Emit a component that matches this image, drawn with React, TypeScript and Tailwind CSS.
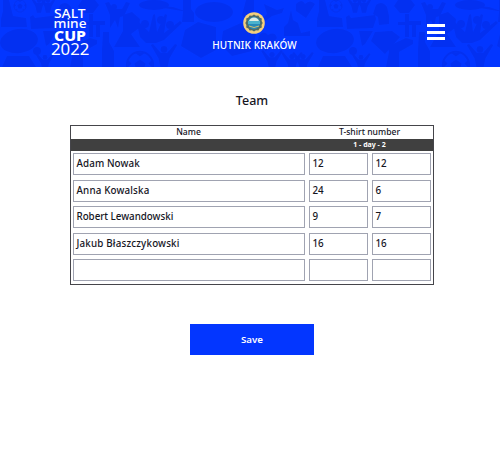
const players = [
  { name: 'Adam Nowak', tracking: 'tracking-[0.1px]', day1: '12', day2: '12' },
  { name: 'Anna Kowalska', tracking: 'tracking-[0.16px]', day1: '24', day2: '6' },
  { name: 'Robert Lewandowski', tracking: 'tracking-[-0.03px]', day1: '9', day2: '7' },
  { name: 'Jakub Błaszczykowski', tracking: 'tracking-[0.18px]', day1: '16', day2: '16' },
  { name: '', tracking: '', day1: '', day2: '' },
];

function Ball({ x, y, r }: { x: number; y: number; r: number }) {
  return (
    <g transform={`translate(${x} ${y}) scale(${r / 10})`}>
      <circle r="9.4" fill="none" stroke="#0330f1" strokeWidth="1.4" />
      <path d="M0-4 4-1 2.5 4h-5L-4-1zM-4-9h8L0-6zM9-4v6L6-1zM-9-4v6l3-3zM4 8l3-3-3 0zM-4 8l-3-3 3 0z" />
    </g>
  );
}

function Fan({ x, y, s }: { x: number; y: number; s: number }) {
  return (
    <g transform={`translate(${x} ${y}) scale(${s})`}>
      <circle cx="0" cy="-6" r="3" />
      <path d="M-12-10l2-1 7 8h6l7-8 2 1-7 12-2 9h-6l-2-9z" />
    </g>
  );
}

function Pattern() {
  return (
    <svg className="absolute inset-0 h-full w-full" aria-hidden="true">
      <defs>
        <pattern id="sport" width="316" height="67" patternUnits="userSpaceOnUse">
          <g fill="#0330f1">
            <Ball x={20} y={6} r={6.5} />
            <path d="M3 0h6l2 8 2 8 13 2 1 9H1v-8l2-8z" />
            <Fan x={39} y={5} s={0.7} />
            <Fan x={48} y={5} s={0.7} />
            <path d="M30 17l3-2 2 3 24-3 1 4-3 9-26 1z" />
            <ellipse cx="19" cy="41" rx="19" ry="12" transform="rotate(-8 19 41)" />
            <path d="M43 31h14l-8 13-3 2-1-5zM59 32l17-1 8 6-15 17-14-13z" />
            <circle cx="37" cy="51" r="4" />
            <path d="M60 5q6-5 11 2l2 9v8l-10 1-1-8-5-3z" />
            <path d="M82 0h13l4 5-6 8h-9l-6-7z" />
            <path d="M105 3l4-1 4 7h9l4-7 4 1-6 13-4 1-2 11-3-8-5 8v-13z" />
            <circle cx="114" cy="7" r="3" />
            <path d="M89 14h4v7h12v4h-5v12h-4V25h-3v12h-4V25h-7v-3h7z" />
            <path d="M123 15l9-3 8 7-1 9-8 6 9 13h-26l9-16z" />
            <path d="M68 32l5-1 4 5v8l13-6 7 2v4l-14 8v15H70l3-15z" />
            <path d="M103 32h6v10l5 9v16h-12V50z" />
            <path d="M7 56h22l7 11H2z" />
            <Fan x={45} y={62} s={0.8} />
            <ellipse cx="154" cy="5" rx="15" ry="5" />
            <path d="M136 4l37 3 15 5-18-3z" />
            <path d="M137 24l2-2 10 10 4-17 2-1 2 18 8-18 2 1-3 18 16-12 2 2-18 17-8 3h-10l-6-6z" />
            <circle cx="145" cy="24" r="4" />
            <circle cx="161" cy="20" r="4" />
            <circle cx="170" cy="25" r="4" />
            <Ball x={140} y={65} r={14} />
            <Fan x={164} y={56} s={1.1} />
            <path d="M183 0h8v9l3 4v9h-12l1-10zM185 30l13-8 18 5v23l-15 8-20-12z" />
            <ellipse cx="214" cy="12" rx="19" ry="10" />
            <path d="M223 31l18-8 15 11-4 17-20 5-11-11zM246 0h8v13l-6 9-6-7z" />
            <path d="M264 4l13 6 7-2-2 5-10 3-9 7-3-2 7-7z" />
            <path d="M296 4q6-6 9 0 5-5 10 0l-9 14-10-7z" />
            <path d="M291 10l2 10 5 3 3 10 9-2v5h-26v-9l4-4zM259 35q5-5 9 0 7-4 9 3l-11 13-9-7z" />
            <Fan x={272} y={60} s={0.9} />
            <Fan x={292} y={62} s={0.9} />
            <Fan x={303} y={62} s={0.9} />
          </g>
        </pattern>
      </defs>
      <rect width="100%" height="100%" fill="url(#sport)" />
    </svg>
  );
}

function CupLogo() {
  return (
    <svg className="absolute left-[50px] top-0" width="42" height="64" viewBox="0 0 42 64" fill="white" fontFamily="'Noto Sans', sans-serif">
      <text x="4" y="17.8" fontSize="12.8" fontWeight="500" textLength="31.5" lengthAdjust="spacingAndGlyphs">SALT</text>
      <text x="3.5" y="28" fontSize="12.8" fontWeight="500" textLength="33" lengthAdjust="spacingAndGlyphs">mine</text>
      <text x="4" y="40.6" fontSize="13.4" fontWeight="800" textLength="32" lengthAdjust="spacingAndGlyphs">CUP</text>
      <text x="1" y="54.8" fontSize="15.8" textLength="38.5" lengthAdjust="spacingAndGlyphs">2022</text>
    </svg>
  );
}

function Crest() {
  return (
    <svg width="22" height="22" viewBox="0 0 22 22">
      <circle cx="11" cy="11" r="10.8" fill="#f5cf7c" />
      <path d="M11 2.5l2 1.3 2.4-.3 1.2 2 2.2 1.1-.2 2.4 1.1 2-1.1 2 .2 2.4-2.2 1.1-1.2 2-2.4-.3-2 1.3-2-1.3-2.4.3-1.2-2-2.2-1.1.2-2.4-1.1-2 1.1-2-.2-2.4 2.2-1.1 1.2-2 2.4.3z" fill="#526b65" />
      <circle cx="11" cy="11" r="6.2" fill="#2788b8" />
      <path d="M6 9a5.3 5.3 0 0 1 10 0z" fill="#e0eee4" />
      <path d="M5 9h12v3H5z" fill="#4bb2cc" />
      <path d="M6 14q5 3 10 0" fill="none" stroke="#d6bd68" />
    </svg>
  );
}

const box = 'flex h-[22px] items-center border border-[#a0a3b1] pl-[2.5px] text-[9.8px] font-medium leading-none';

export default function App() {
  return (
    <div className="flex h-[473px] w-[500px] flex-col items-center overflow-hidden bg-white font-['Noto_Sans',sans-serif] text-[#16161f]">
      <header className="relative flex h-[67px] w-full shrink-0 flex-col items-center bg-[#0336ff] pl-[9px] pt-[12px] text-white">
        <Pattern />
        <CupLogo />
        <div className="relative flex flex-col items-center">
          <Crest />
          <div className="mt-[4px] whitespace-nowrap text-[10px] font-medium leading-[14px] tracking-[0.12px]">HUTNIK KRAKÓW</div>
        </div>
        <button aria-label="Menu" className="absolute left-[427px] top-[24px] flex w-[18px] flex-col gap-[3.5px]">
          <span className="h-[3px] bg-white" />
          <span className="h-[3px] bg-white" />
          <span className="h-[3px] bg-white" />
        </button>
      </header>
      <h1 className="mt-[25px] pl-[4px] text-[12.5px] font-medium leading-[18px]">Team</h1>
      <section className="ml-[4px] mt-[15px] h-[160px] w-[364px] shrink-0 border border-[#45454a]">
        <div className="flex h-[13px] text-center text-[8.6px] font-medium leading-[12px]">
          <div className="w-[235px]">Name</div>
          <div className="flex-1">T-shirt number</div>
        </div>
        <div className="flex h-[12px] justify-end bg-[#404040] text-center text-[7px] font-bold leading-[11.5px] text-white">
          <div className="w-[127px]">1 - day - 2</div>
        </div>
        <div className="flex flex-col gap-[4.6px] px-[2px] pt-[2px]">
          {players.map((p, i) => (
            <div key={i} className="flex">
              <div className={`${box} ${p.tracking} w-[232px]`}>{p.name}</div>
              <div className={`${box} ml-[4px] w-[59px]`}>{p.day1}</div>
              <div className={`${box} ml-[4px] w-[59px]`}>{p.day2}</div>
            </div>
          ))}
        </div>
      </section>
      <button className="ml-[4px] mt-[39px] h-[31px] w-[124px] shrink-0 bg-[#0336ff] pt-px text-[9.7px] font-semibold text-white">Save</button>
    </div>
  );
}
